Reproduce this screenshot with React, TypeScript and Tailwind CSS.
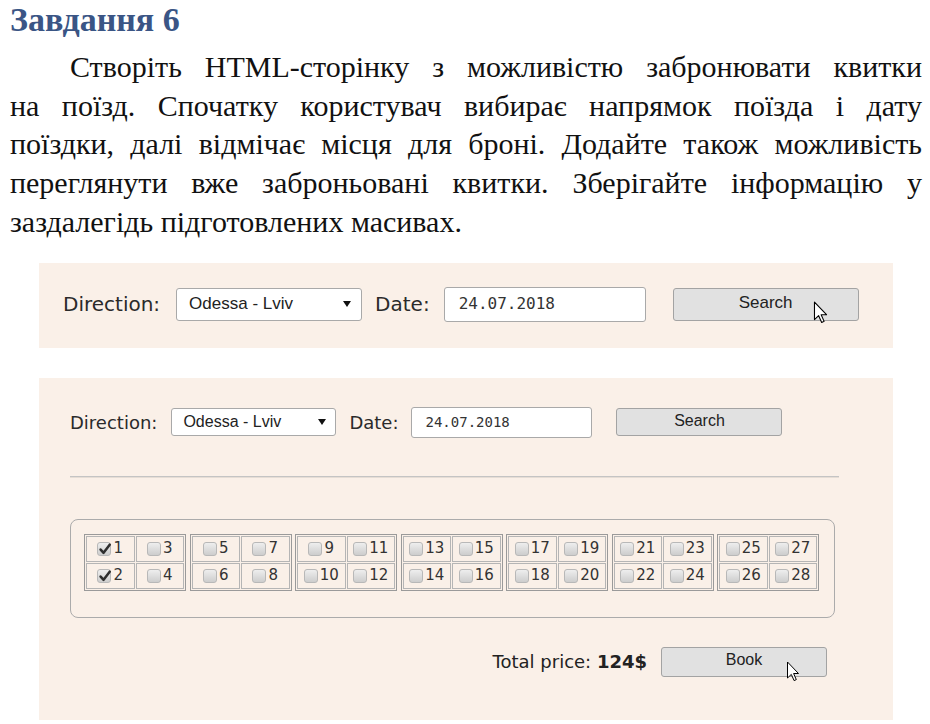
import React from 'react'

const lines = [
  'на поїзд. Спочатку користувач вибирає напрямок поїзда і дату',
  'поїздки, далі відмічає місця для броні. Додайте також можливість',
  'переглянути вже заброньовані квитки. Зберігайте інформацію у',
]

const serif = { fontFamily: '"Liberation Serif", "Times New Roman", serif' }
const sans = { fontFamily: '"DejaVu Sans", sans-serif' }

function Cursor({ className }: { className: string }) {
  return (
    <svg className={className} viewBox="0 0 13 21" fill="none">
      <path
        d="M1 1 L1 17 L4.8 13.4 L7.6 19.6 L9.8 18.6 L7.1 12.5 L12 12.5 Z"
        fill="#fff"
        stroke="#000"
        strokeWidth="1"
        strokeLinejoin="round"
      />
    </svg>
  )
}

function Arrow() {
  return (
    <svg width="8" height="6" viewBox="0 0 8 6">
      <path d="M0 0 L8 0 L4 6 Z" fill="#111" />
    </svg>
  )
}

function SearchRow({ big }: { big: boolean }) {
  // верхня панель трохи більша за нижню
  const label = big ? 'text-[20px]' : 'text-[18px]'
  return (
    <div className="flex items-center" style={sans}>
      <span className={`${label} text-[#2a2a2a] ${big ? 'mr-[16px]' : 'mr-[14px]'}`}>Direction:</span>
      <div
        className={`flex items-center justify-between bg-white border border-[#a9a9a9] rounded-[3px] font-['Liberation_Sans',Arial,sans-serif] text-[#222] ${
          big ? 'w-[186px] h-[33px] pl-[12px] pr-[10px] text-[17px]' : 'w-[165px] h-[28px] pl-[11px] pr-[9px] text-[16px]'
        }`}
      >
        <span>Odessa - Lviv</span>
        <Arrow />
      </div>
      <span className={`${label} text-[#2a2a2a] ${big ? 'ml-[13px] mr-[14px]' : 'ml-[13px] mr-[13px]'}`}>Date:</span>
      <div
        className={`flex items-center bg-white border border-[#a9a9a9] rounded-[3px] font-['DejaVu_Sans_Mono',monospace] text-[#333] ${
          big ? 'w-[202px] h-[35px] pl-[14px] text-[16px]' : 'w-[181px] h-[31px] pl-[13px] text-[14px]'
        }`}
      >
        24.07.2018
      </div>
      <div
        className={`relative flex items-center justify-center bg-[#e1e1e1] border border-[#a3a3a3] rounded-[3px] font-['Liberation_Sans',Arial,sans-serif] text-[#222] ${
          big ? 'ml-[27px] w-[186px] h-[33px] text-[17px] pb-[3px]' : 'ml-[24px] w-[166px] h-[28px] text-[16px] pb-[3px]'
        }`}
      >
        Search
        {big && <Cursor className="absolute left-[139px] top-[12px] w-[15px] h-[23px]" />}
      </div>
    </div>
  )
}

function CheckBox({ checked }: { checked: boolean }) {
  return (
    <span className="relative block w-[14px] h-[14px] rounded-[3px] border border-[#b8b8b8] bg-gradient-to-b from-[#eeeeee] to-[#cdcdcd] shrink-0">
      {checked && (
        <svg className="absolute left-[1px] top-[0px] w-[12px] h-[12px]" viewBox="0 0 11 11">
          <path d="M1.5 6 L4.2 9 L9.8 1.5" fill="none" stroke="#2e2e2e" strokeWidth="2.3" strokeLinecap="round" strokeLinejoin="round" />
        </svg>
      )}
    </span>
  )
}

function Seat({ n }: { n: number }) {
  return (
    <div className="h-[26px] border border-[#b5b5b5] flex items-center justify-center gap-[2px]">
      <CheckBox checked={n <= 2} />
      <span className="text-[15px] text-[#333] leading-none">{n}</span>
    </div>
  )
}

export default function App() {
  const groups = Array.from({ length: 7 }, (_, g) => g * 4 + 1)

  return (
    <div className="w-[930px] h-[724px] bg-white overflow-hidden">
      <div className="pl-[10px] pr-[8px] text-[#111]" style={serif}>
        <h1 className="text-[34px] leading-[40px] font-bold text-[#3a5585]">Завдання 6</h1>
        <div className="mt-[8px] text-[30px] leading-[38.7px]">
          <p className="indent-[60px] text-justify [text-align-last:justify]">
            Створіть HTML-сторінку з можливістю забронювати квитки
          </p>
          {lines.map((l) => (
            <p key={l} className="text-justify [text-align-last:justify]">
              {l}
            </p>
          ))}
          <p>заздалегідь підготовлених масивах.</p>
        </div>
      </div>

      {/* перша панель */}
      <div className="ml-[39px] mt-[21px] w-[854px] h-[85px] bg-[#faf0e8] pl-[24px] pt-[24px]">
        <SearchRow big />
      </div>

      {/* друга панель */}
      <div className="ml-[39px] mt-[30px] w-[854px] h-[342px] bg-[#faf0e8] pl-[31px] pr-[54px] pt-[29px]" style={sans}>
        <SearchRow big={false} />
        <div className="mt-[38px] h-[2px] bg-[#c4c4c4] border-b border-[#e6ddd5]" />

        <div className="mt-[41px] w-[765px] h-[99px] border border-[#ababab] rounded-[8px] pl-[13px] pt-[14px]">
          <div className="flex gap-[3.5px]">
            {groups.map((start) => (
              <div key={start} className="w-[102px] border border-[#9a9a9a] p-[1px] grid grid-cols-2 gap-[1px]">
                <Seat n={start} />
                <Seat n={start + 2} />
                <Seat n={start + 1} />
                <Seat n={start + 3} />
              </div>
            ))}
          </div>
        </div>

        <div className="mt-[29px] flex items-center justify-end pr-[12px]">
          <span className="text-[18px] text-[#222]">
            Total price: <b>124$</b>
          </span>
          <div className="relative ml-[14px] w-[166px] h-[30px] bg-[#e1e1e1] border border-[#a3a3a3] rounded-[3px] flex items-center justify-center pb-[3px] font-['Liberation_Sans',Arial,sans-serif] text-[16px] text-[#222]">
            Book
            <Cursor className="absolute left-[124px] top-[13px] w-[14px] h-[21px]" />
          </div>
        </div>
      </div>
    </div>
  )
}
